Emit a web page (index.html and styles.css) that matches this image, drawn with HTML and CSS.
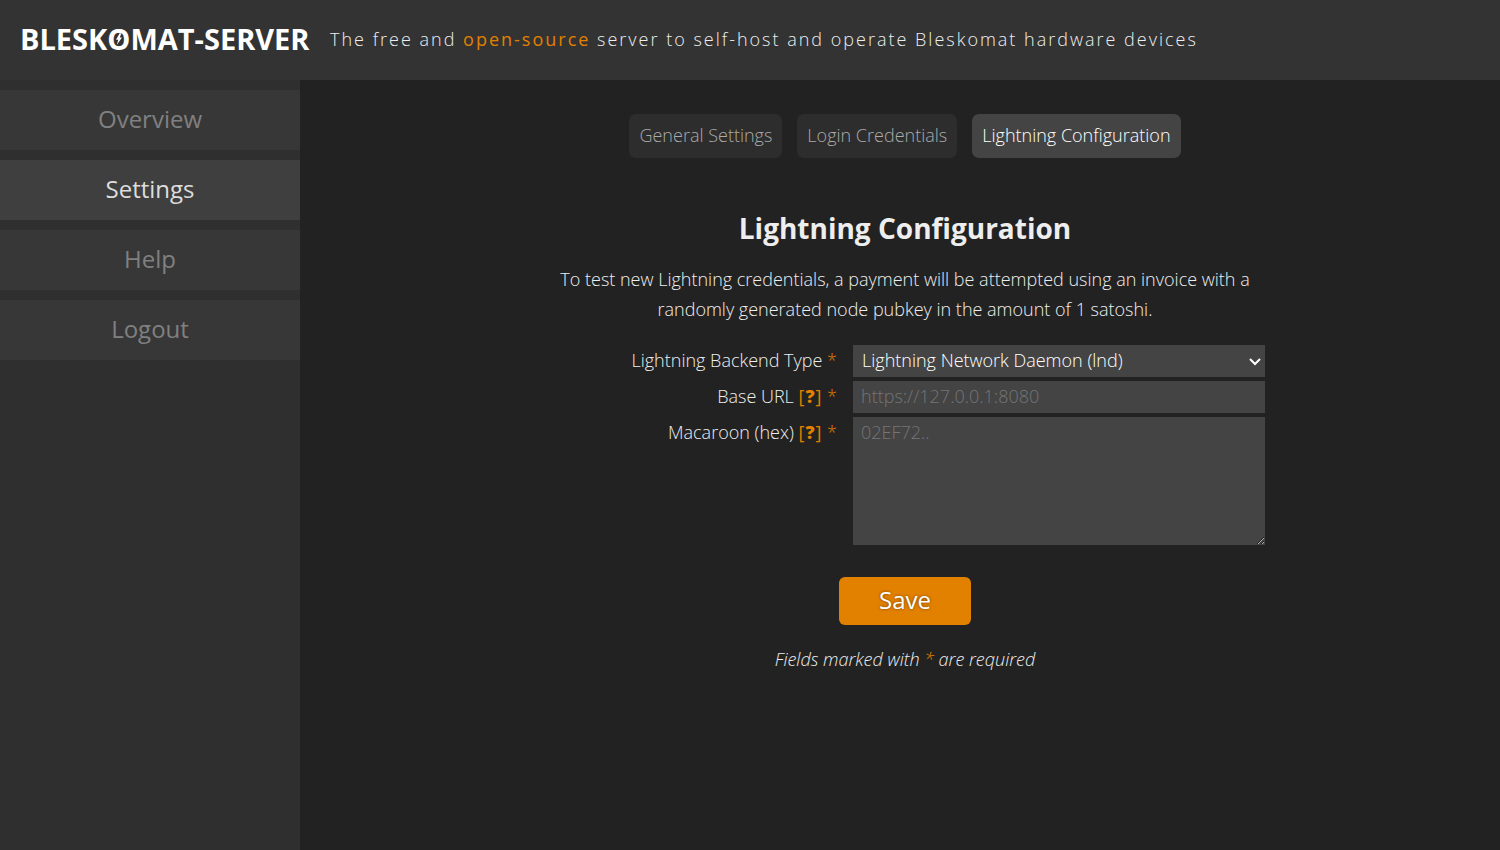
FILE: index.html
```html
<!DOCTYPE html>
<html lang="en">
<head>
<meta charset="utf-8">
<meta name="viewport" content="width=device-width, initial-scale=1">
<title>Lightning Configuration - Bleskomat Server</title>
<link rel="stylesheet" href="styles.css">
</head>
<body>
<header class="header">
  <a class="logo" href="#" aria-label="BLESKOMAT-SERVER"><span>BLESK</span><span class="logo-o">O<svg class="bolt" viewBox="0 0 8 16" aria-hidden="true"><path d="M5 0 0 9h3L1 16 8 6H5L7 1Z"/></svg></span><span>MAT-SERVER</span></a>
  <p class="tagline">The free and <a href="#">open-source</a> server to self-host and operate Bleskomat hardware devices</p>
</header>
<div class="layout">
  <nav class="sidebar" aria-label="Main">
    <a class="nav-item" href="#">Overview</a>
    <a class="nav-item active" href="#" aria-current="page">Settings</a>
    <a class="nav-item" href="#">Help</a>
    <a class="nav-item" href="#">Logout</a>
  </nav>
  <main class="content">
    <nav class="tabs" aria-label="Settings">
      <a class="tab" href="#">General Settings</a>
      <a class="tab" href="#">Login Credentials</a>
      <a class="tab active" href="#" aria-current="page">Lightning Configuration</a>
    </nav>
    <form class="form">
      <h1 class="title">Lightning Configuration</h1>
      <p class="intro">To test new Lightning credentials, a payment will be attempted using an invoice with a randomly generated node pubkey in the amount of 1 satoshi.</p>
      <div class="fields">
        <div class="label"><label for="backend">Lightning Backend Type</label> <span class="required">*</span></div>
        <div class="select">
          <select class="control" id="backend"><option>Lightning Network Daemon (lnd)</option></select>
          <svg class="chevron" viewBox="0 0 12 8" aria-hidden="true"><path d="m1 1 5 5 5-5"/></svg>
        </div>
        <div class="label"><label for="url">Base URL</label> <a class="help" href="#">[<b>?</b>]</a> <span class="required">*</span></div>
        <input class="control" id="url" type="text" placeholder="https://127.0.0.1:8080">
        <div class="label"><label for="macaroon">Macaroon (hex)</label> <a class="help" href="#">[<b>?</b>]</a> <span class="required">*</span></div>
        <textarea class="control area" id="macaroon" placeholder="02EF72.."></textarea>
      </div>
      <button class="save" type="submit">Save</button>
      <p class="note">Fields marked with <span class="required">*</span> are required</p>
    </form>
  </main>
</div>
</body>
</html>
```
FILE: styles.css
```css
* { box-sizing: border-box; }

body {
  margin: 0;
  min-height: 100vh;
  display: flex;
  flex-direction: column;
  background: #222;
  color: #eee;
  font-family: "Open Sans", sans-serif;
  font-size: 18px;
  font-weight: 300;
  line-height: 30px;
}

a { color: #e28000; text-decoration: none; }
p, h1 { margin: 0; }

.header {
  display: flex;
  align-items: center;
  gap: 20px;
  min-height: 80px;
  padding: 0 20px 2px;
  background: #333;
}

.logo {
  display: flex;
  flex: 0 0 290px;
  color: #fff;
  font-size: 29px;
  font-weight: 700;
  line-height: 40px;
}
.logo-o { position: relative; }
.bolt {
  position: absolute;
  inset: 0;
  width: 6px;
  height: 12px;
  margin: auto;
  fill: #fff;
}

.tagline { letter-spacing: 2px; }
.tagline a { font-weight: 400; }

.layout { display: flex; flex: 1; }

.sidebar {
  display: flex;
  flex: 0 0 300px;
  flex-direction: column;
  gap: 10px;
  padding-top: 10px;
  background: #2f2f2f;
}
.nav-item {
  padding-bottom: 2px;
  background: #373737;
  color: #808080;
  font-size: 24px;
  font-weight: 400;
  line-height: 58px;
  text-align: center;
}
.nav-item.active { background: #3f3f3f; color: #ddd; }

.content {
  display: flex;
  flex: 1;
  flex-direction: column;
  align-items: center;
  gap: 50px;
  padding: 34px 0 34px 10px;
}

.tabs { display: flex; gap: 15px; }
.tab {
  padding: 6px 10px 8px;
  border-radius: 7px;
  background: #2d2d2d;
  color: #aaa;
}
.tab.active { background: #444; color: #fff; }

.form {
  display: flex;
  flex-direction: column;
  align-items: center;
  width: 100%;
  max-width: 720px;
}
.title {
  margin-bottom: 16px;
  font-size: 28px;
  font-weight: 700;
  line-height: 40px;
}
.intro { max-width: 700px; text-align: center; }

.fields {
  display: grid;
  grid-template-columns: 73fr 103fr;
  gap: 4px 16px;
  width: 100%;
  margin-top: 21px;
}
.label { line-height: 30px; text-align: right; }
.required { color: #e28000; }
.help { font-weight: 400; letter-spacing: 1px; }
.help b { font-weight: 800; }

.control {
  display: block;
  width: 100%;
  height: 32px;
  margin: 0;
  padding: 0 8px 2px;
  border: 0;
  border-radius: 0;
  background: #444;
  color: #fff;
  font: inherit;
}
.control::placeholder { color: #757575; }
.select { position: relative; }
.select .control { padding-left: 9px; appearance: none; }
.chevron {
  position: absolute;
  top: 13px;
  right: 4px;
  width: 12px;
  height: 8px;
  fill: none;
  stroke: #fff;
  stroke-width: 2;
  pointer-events: none;
}
.area {
  height: 128px;
  resize: both;
}

.save {
  margin-top: 32px;
  padding: 0 40px 2px;
  border: 0;
  border-radius: 6px;
  background: #e28000;
  color: #fff;
  font: inherit;
  font-size: 24px;
  font-weight: 400;
  line-height: 46px;
  text-shadow: 0 0 3px rgba(0, 0, 0, 0.5);
}
.note { margin-top: 19px; font-style: italic; }
```
